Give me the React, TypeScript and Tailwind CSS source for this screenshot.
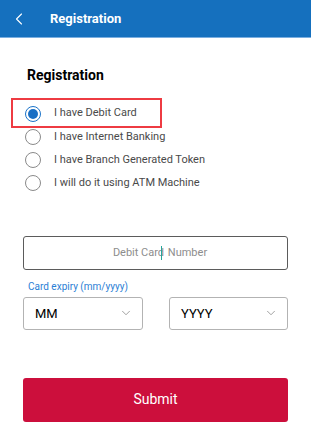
import { ChevronLeft, ChevronDown } from 'lucide-react'

const options = [
  'I have Debit Card',
  'I have Internet Banking',
  'I have Branch Generated Token',
  'I will do it using ATM Machine',
]

export default function App() {
  return (
    <div className="w-[311px] h-[429px] bg-white overflow-hidden font-['Roboto',sans-serif]">
      {/* Header */}
      <header className="h-[38px] bg-[#1570be] border-b border-[#7aaee0] flex items-center">
        <ChevronLeft size={20} strokeWidth={1.3} className="text-white ml-[9px]" />
        <span className="ml-[21px] text-white text-[13px] font-bold">Registration</span>
      </header>

      <div className="px-[23px]">
        <h1 className="mt-[27px] ml-[4px] text-[14px] font-bold text-black leading-[20px]">Registration</h1>

        {/* Options */}
        <div className="mt-[17px] flex flex-col">
          {options.map((label, i) => (
            <div key={label} className="relative h-[23.2px] flex items-center">
              {i === 0 && (
                <div className="absolute left-[-12px] top-[-4px] w-[151px] h-[30px] border-2 border-[#ee3b42]" />
              )}
              <span
                className={`ml-[2px] w-[16px] h-[16px] rounded-full border flex items-center justify-center ${
                  i === 0 ? 'border-[#1a73c9]' : 'border-[#8a8a8a]'
                }`}
              >
                {i === 0 && <span className="w-[10px] h-[10px] rounded-full bg-[#1a6fc4]" />}
              </span>
              <span className="ml-[13px] text-[11px] text-[#4a4a4a]">{label}</span>
            </div>
          ))}
        </div>

        {/* Debit card number */}
        <div className="mt-[41px] h-[34px] rounded-[3px] border border-[#5b5b5b] flex items-center justify-center pl-[9px]">
          <span className="text-[11px] text-[#8d8d8d]">
            Debit Card
            <span className="inline-block w-px h-[14px] bg-[#26a69a] align-middle -ml-[3px] mr-[3px]" />{' '}
            Number
          </span>
        </div>

        <div className="mt-[10px] ml-[5px] text-[10px] text-[#2b80d5] leading-[14px]">Card expiry (mm/yyyy)</div>

        {/* Expiry selects */}
        <div className="mt-[3px] flex justify-between">
          <div className="w-[120px] h-[33px] rounded-[3px] border border-[#b3b3b3] flex items-center justify-between pl-[11px] pr-[9px]">
            <span className="text-[13px] text-black">MM</span>
            <ChevronDown size={14} strokeWidth={1.2} className="text-[#7a7a7a]" />
          </div>
          <div className="w-[119px] h-[33px] rounded-[3px] border border-[#b3b3b3] flex items-center justify-between pl-[11px] pr-[9px]">
            <span className="text-[13px] text-black">YYYY</span>
            <ChevronDown size={14} strokeWidth={1.2} className="text-[#7a7a7a]" />
          </div>
        </div>

        {/* Submit */}
        <button className="mt-[48px] w-full h-[44px] rounded-[3px] bg-[#cc0f3c] text-white text-[14px] flex items-center justify-center">
          Submit
        </button>
      </div>
    </div>
  )
}
